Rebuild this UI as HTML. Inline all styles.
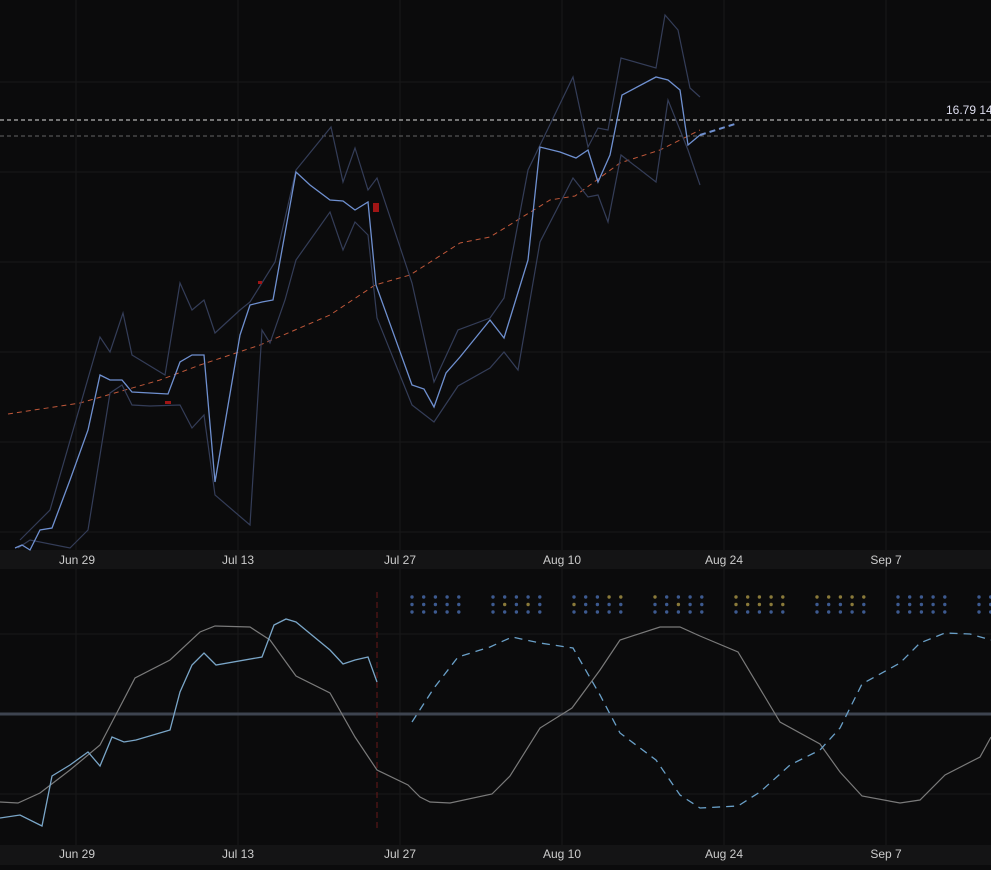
<!DOCTYPE html><html><head><style>body{margin:0;background:#0b0b0c;width:991px;height:865px;overflow:hidden;font-family:"Liberation Sans",sans-serif}</style></head><body>
<svg width="991" height="865" xmlns="http://www.w3.org/2000/svg">
<rect width="991" height="865" fill="#0b0b0c"/>
<g stroke="#18181a" stroke-width="1">
<line x1="0" y1="82" x2="991" y2="82"/><line x1="0" y1="172" x2="991" y2="172"/><line x1="0" y1="262" x2="991" y2="262"/><line x1="0" y1="352" x2="991" y2="352"/><line x1="0" y1="442" x2="991" y2="442"/><line x1="0" y1="532" x2="991" y2="532"/>
<line x1="0" y1="634" x2="991" y2="634"/><line x1="0" y1="794" x2="991" y2="794"/>
<line x1="76" y1="0" x2="76" y2="845"/><line x1="238" y1="0" x2="238" y2="845"/><line x1="400" y1="0" x2="400" y2="845"/><line x1="562" y1="0" x2="562" y2="845"/><line x1="724" y1="0" x2="724" y2="845"/><line x1="886" y1="0" x2="886" y2="845"/>
</g>
<rect x="0" y="550" width="991" height="19" fill="#141415"/>
<rect x="0" y="845" width="991" height="20" fill="#141415"/>
<line x1="0" y1="120" x2="991" y2="120" stroke="#ddd" stroke-dasharray="4,3"/>
<line x1="0" y1="136" x2="991" y2="136" stroke="#666" stroke-dasharray="4,3"/>
<text x="946" y="114" fill="#dde" font-size="12">16.79 14</text>
<polyline fill="none" stroke="#c0583a" stroke-width="1" stroke-dasharray="5,4" points="8,414 80,403 160,380 200,365 260,345 330,315 375,285 410,275 460,243 490,237 550,200 575,196 620,163 660,150 700,130"/>
<polyline fill="none" stroke="#343d58" stroke-width="1.2" points="20,540 50,510 100,337 110,352 123,313 132,355 165,375 180,283 192,310 204,300 215,333 240,310 250,302 275,262 296,170 331,127 343,182 355,148 368,190 377,178 412,283 434,382 458,330 490,318 504,298 528,170 573,77 588,147 598,128 608,130 621,58 656,68 665,15 678,30 690,88 700,97"/>
<polyline fill="none" stroke="#343d58" stroke-width="1.2" points="18,548 30,540 70,548 88,530 110,393 122,385 132,405 150,406 180,405 192,428 204,415 215,495 250,525 262,330 270,343 285,300 296,260 330,212 343,250 355,222 368,235 377,318 412,405 434,422 458,386 490,368 504,352 518,370 540,242 573,178 588,197 598,195 608,222 621,155 656,182 668,100 688,150 700,185"/>
<polyline fill="none" stroke="#6f90d0" stroke-width="1.3" points="15,548 22,545 30,550 40,530 52,528 70,480 88,430 100,375 110,380 122,380 132,392 150,393 168,394 180,362 192,355 204,355 215,482 240,335 250,305 262,302 273,300 296,172 310,185 330,200 343,201 355,210 368,202 376,285 412,385 424,389 434,407 446,373 460,357 490,320 504,338 528,260 540,147 560,152 576,158 588,150 598,182 610,155 622,95 656,77 668,80 680,90 688,145 700,135"/>
<polyline fill="none" stroke="#6f90d0" stroke-width="2" stroke-dasharray="6,4" points="700,135 735,124"/>
<rect x="373" y="203" width="6" height="9" fill="#a01515"/><rect x="258" y="281" width="4" height="3" fill="#a01515"/><rect x="165" y="401" width="6" height="3" fill="#a01515"/>
<g fill="#ccc" font-size="12" text-anchor="middle">
<text x="77" y="564">Jun 29</text><text x="238" y="564">Jul 13</text><text x="400" y="564">Jul 27</text><text x="562" y="564">Aug 10</text><text x="724" y="564">Aug 24</text><text x="886" y="564">Sep 7</text>
<text x="77" y="858">Jun 29</text><text x="238" y="858">Jul 13</text><text x="400" y="858">Jul 27</text><text x="562" y="858">Aug 10</text><text x="724" y="858">Aug 24</text><text x="886" y="858">Sep 7</text>
</g>
<line x1="0" y1="714" x2="991" y2="714" stroke="#3e4450" stroke-width="3"/>
<line x1="377" y1="592" x2="377" y2="832" stroke="#6a1a1a" stroke-dasharray="6,4"/>
<polyline fill="none" stroke="#7a7a7a" stroke-width="1.2" points="0,802 18,803 40,793 70,770 100,745 135,678 170,660 200,632 215,626 250,627 270,640 296,676 330,693 355,737 377,770 408,785 420,797 430,802 450,803 492,794 510,776 540,728 572,708 600,670 620,640 660,627 680,627 700,636 738,652 780,722 820,744 840,772 862,796 900,803 920,800 945,775 980,757 991,737"/>
<polyline fill="none" stroke="#7aa6c8" stroke-width="1.3" points="0,818 20,815 42,826 52,776 70,765 88,752 100,766 112,737 124,742 136,740 170,730 180,692 192,665 204,653 216,665 262,657 274,625 286,619 296,622 330,650 343,664 355,660 368,657 377,682"/>
<polyline fill="none" stroke="#6aa0c8" stroke-width="1.3" stroke-dasharray="8,6" points="412,722 434,688 458,657 490,647 512,637 540,643 573,648 600,695 620,733 656,760 680,795 700,808 738,806 760,792 790,765 820,750 840,728 862,684 900,663 920,643 945,633 970,634 991,640"/>
<g id="dots"></g>
</svg>
<script>
var g=document.getElementById('dots'),B='#3d5a90',Y='#8a7a3a';
var pats=["BBBBB BBBBB BBBBB","BBBBB BYBYB BBBBB","BBBYY YBBBB BBBBB","YBBBB BBYBB BBBBB","YYYYY YYYYY BBBBB","YYYYY BBBYB BBBBB","BBBBB BBBBB BBBBB","BBBBB BBBBB BBBBB"];
for(var k=0;k<8;k++){var rows=pats[k].split(' ');for(var r=0;r<3;r++)for(var c=0;c<5;c++){var e=document.createElementNS('http://www.w3.org/2000/svg','circle');e.setAttribute('cx',412+k*81+c*11.7);e.setAttribute('cy',597+r*7.5);e.setAttribute('r',1.7);e.setAttribute('fill',rows[r][c]=='Y'?Y:B);g.appendChild(e);}}
</script>
</body></html>
